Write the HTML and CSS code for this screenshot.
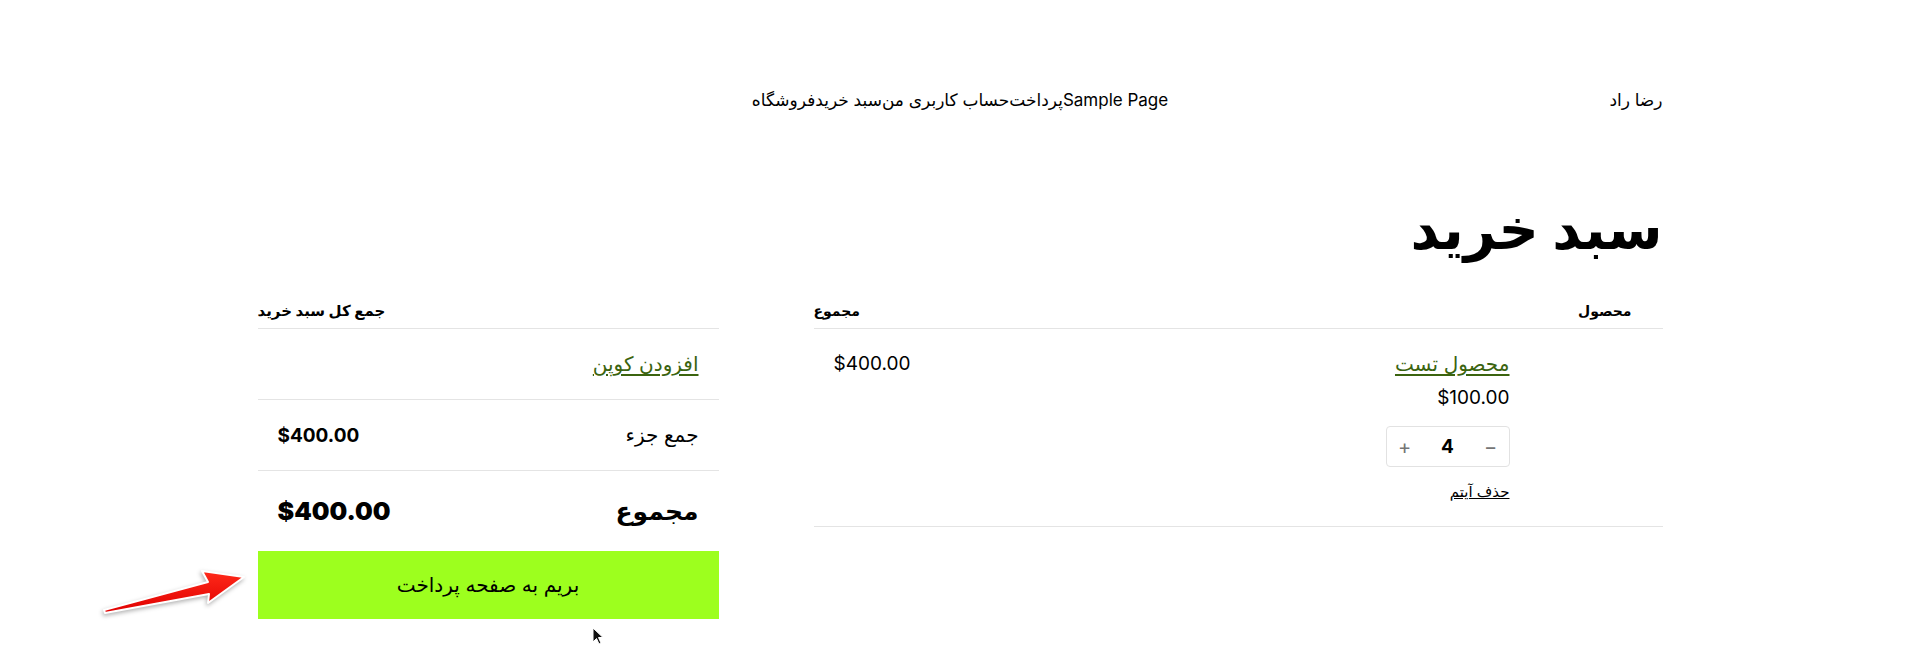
FILE: index.html
```html
<!DOCTYPE html>
<html lang="fa" dir="rtl">
<head>
    <meta charset="UTF-8">
    <meta name="viewport" content="width=device-width, initial-scale=1.0">
    <title>سبد خرید</title>
    <link rel="stylesheet" href="styles.css">
</head>
<body>

    <div class="page">
        <!-- Site header -->
        <header class="site-header">
            <a class="site-title" href="#">رضا راد</a>
            <nav class="main-nav">
                <a href="#">Sample Page</a>
                <a href="#">پرداخت</a>
                <a href="#">حساب کاربری من</a>
                <a href="#">سبد خرید</a>
                <a href="#">فروشگاه</a>
            </nav>
            <span></span>
        </header>

        <h1 class="page-title">سبد خرید</h1>

        <div class="cart">
            <!-- Cart items -->
            <div class="cart-items">
                <div class="cart-head">
                    <span class="th-product">محصول</span>
                    <span class="th-total">مجموع</span>
                </div>
                <div class="cart-row">
                    <div class="row-image"></div>
                    <div class="row-details">
                        <a class="product-name" href="#">محصول تست</a>
                        <div class="product-price">$100.00</div>
                        <div class="qty">
                            <button class="qty-btn">−</button>
                            <span class="qty-value">4</span>
                            <button class="qty-btn">+</button>
                        </div>
                        <a class="remove-link" href="#">حذف آیتم</a>
                    </div>
                    <div class="row-total">$400.00</div>
                </div>
            </div>

            <!-- Cart totals -->
            <div class="cart-totals">
                <div class="cart-head totals-head">
                    <span>جمع کل سبد خرید</span>
                </div>
                <div class="totals-row">
                    <a class="coupon-link" href="#">افزودن کوپن</a>
                </div>
                <div class="totals-row">
                    <span>جمع جزء</span>
                    <b class="subtotal-value">$400.00</b>
                </div>
                <div class="totals-row grand">
                    <span>مجموع</span>
                    <b>$400.00</b>
                </div>
                <a class="checkout-btn" href="#">بریم به صفحه پرداخت</a>
            </div>
        </div>
    </div>

    <!-- annotation arrow -->
    <svg class="note-arrow" width="160" height="64" viewBox="0 0 160 64">
        <defs>
            <linearGradient id="arrowFill" x1="0" y1="0" x2="0" y2="1">
                <stop offset="0" stop-color="#ff2a1a"/>
                <stop offset="1" stop-color="#e00000"/>
            </linearGradient>
        </defs>
        <polygon points="8,50 112,22 106,11 148,17 112,43 113,34 9,53" fill="url(#arrowFill)" stroke="#fff" stroke-width="2" stroke-linejoin="round"/>
    </svg>

    <!-- mouse cursor -->
    <svg class="cursor" width="14" height="20" viewBox="0 0 14 20">
        <polygon points="1,1 1,15 4.5,11.5 7,17 9,16 6.5,10.5 11,10.5" fill="#111" stroke="#fff" stroke-width="1"/>
    </svg>

</body>
</html>
```

FILE: styles.css
```css
html, body {
    margin: 0;
    padding: 0;
}
body {
    font-family: Inter, "DejaVu Sans", sans-serif;
    font-size: 18px;
    color: #000;
    background: #fff;
    direction: rtl;
}
a {
    color: inherit;
    text-decoration: none;
}
.page {
    width: 1405px;
    margin: 0 auto;
}

/* header */
.site-header {
    display: grid;
    grid-template-columns: 1fr auto 1fr;
    align-items: center;
    padding-top: 85px;
    line-height: 30px;
    font-size: 17px;
}
.main-nav {
    display: flex;
}

.page-title {
    margin: 76px 0 0;
    font-size: 56px;
    font-weight: 700;
    line-height: 76px;
}

/* cart layout */
.cart {
    display: grid;
    grid-template-columns: 849px 461px;
    column-gap: 95px;
    margin-top: 34px;
}
.cart-head {
    display: flex;
    justify-content: space-between;
    font-size: 14px;
    font-weight: 700;
    line-height: 20px;
    padding-bottom: 7px;
    border-bottom: 1px solid #e4e4e4;
}
.totals-head {
    justify-content: flex-end;
    font-size: 15px;
}
.th-product {
    padding-right: 31px;
}

.cart-row {
    display: flex;
    padding: 21px 0 24px;
    border-bottom: 1px solid #e4e4e4;
}
.row-image {
    width: 153px;
}
.row-details {
    flex: 1;
    display: flex;
    flex-direction: column;
    align-items: flex-start;
}
.product-name {
    color: #3b640f;
    text-decoration: underline;
    text-underline-offset: 3px;
    font-size: 20px;
    line-height: 28px;
}
.product-price {
    margin-top: 6px;
    font-size: 19px;
    line-height: 28px;
}
.qty {
    display: flex;
    align-items: center;
    justify-content: space-between;
    width: 122px;
    height: 39px;
    margin-top: 14px;
    border: 1px solid #e2e2e2;
    border-radius: 4px;
}
.qty-btn {
    background: none;
    border: none;
    width: 36px;
    font-family: inherit;
    font-size: 20px;
    color: #757575;
    padding: 0;
}
.qty-value {
    font-weight: 700;
    font-size: 19px;
}
.remove-link {
    margin-top: 15px;
    font-size: 15px;
    line-height: 20px;
    text-decoration: underline;
}
.row-total {
    padding-left: 20px;
    font-size: 19px;
    line-height: 28px;
}

/* totals */
.totals-row {
    display: flex;
    justify-content: space-between;
    align-items: center;
    padding: 0 20px;
    height: 70px;
    border-bottom: 1px solid #e4e4e4;
    font-size: 20px;
}
.coupon-link {
    color: #3b640f;
    text-decoration: underline;
    text-underline-offset: 3px;
}
.subtotal-value {
    font-size: 19px;
}
.totals-row.grand {
    height: 80px;
    border-bottom: none;
    font-size: 25px;
    font-weight: 700;
}
.checkout-btn {
    display: flex;
    justify-content: center;
    align-items: center;
    height: 68px;
    background: #9dff1e;
    font-size: 20px;
}

/* overlays */
.note-arrow {
    position: absolute;
    left: 96px;
    top: 560px;
    filter: drop-shadow(-1px 2px 2px rgba(0, 0, 0, 0.3));
}
.cursor {
    position: absolute;
    left: 592px;
    top: 627px;
}
```
